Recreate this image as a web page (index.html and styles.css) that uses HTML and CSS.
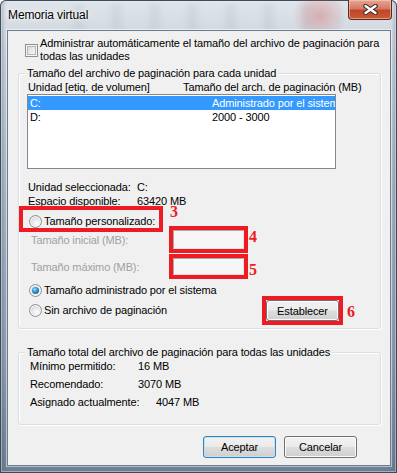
FILE: index.html
```html
<!DOCTYPE html>
<html lang="es">
<head>
    <meta charset="UTF-8">
    <meta name="viewport" content="width=device-width, initial-scale=1.0">
    <title>Memoria virtual</title>
    <link rel="stylesheet" href="styles.css">
</head>
<body>
<div class="window">
    <div class="glass-band"></div>
    <div class="glass-glow"></div>

    <div class="titlebar">
        <span class="title">Memoria virtual</span>
        <div class="close-btn">
            <svg width="17" height="11" viewBox="0 0 17 11">
                <path d="M3.5 2 L13.5 9 M13.5 2 L3.5 9" stroke="#3a2b28" stroke-width="4.5" stroke-linecap="round"/>
                <path d="M3.5 2 L13.5 9 M13.5 2 L3.5 9" stroke="#fff" stroke-width="2.4" stroke-linecap="round"/>
            </svg>
        </div>
    </div>

    <div class="client">
        <div class="auto-row">
            <span class="checkbox"></span>
            <span class="auto-label">Administrar automáticamente el tamaño del archivo de paginación para<br>todas las unidades</span>
        </div>

        <div class="group group-drives">
            <div class="group-title">Tamaño del archivo de paginación para cada unidad</div>
            <div class="list-head">
                <span class="col-drive">Unidad [etiq. de volumen]</span>
                <span>Tamaño del arch. de paginación (MB)</span>
            </div>
            <div class="listbox">
                <div class="list-item selected"><span class="item-drive">C:</span><span>Administrado por el sistema</span></div>
                <div class="list-item"><span class="item-drive">D:</span><span>2000 - 3000</span></div>
            </div>

            <div class="info-row first"><span class="info-label">Unidad seleccionada:</span><span>C:</span></div>
            <div class="info-row"><span class="info-label">Espacio disponible:</span><span>63420 MB</span></div>

            <div class="option custom mark">
                <span class="radio"></span>
                <span>Tamaño personalizado:</span>
                <span class="mark-num num-3">3</span>
            </div>

            <div class="size-row initial">
                <span class="size-label">Tamaño inicial (MB):</span>
                <span class="field">
                    <input class="edit mark" type="text" disabled>
                    <span class="mark-num num-4">4</span>
                </span>
            </div>
            <div class="size-row maximum">
                <span class="size-label">Tamaño máximo (MB):</span>
                <span class="field">
                    <input class="edit short mark" type="text" disabled>
                    <span class="mark-num num-5">5</span>
                </span>
            </div>

            <div class="option system">
                <span class="radio checked"></span>
                <span>Tamaño administrado por el sistema</span>
            </div>
            <div class="option-row">
                <div class="option">
                    <span class="radio"></span>
                    <span>Sin archivo de paginación</span>
                </div>
                <span class="btn-mark mark">
                    <button class="btn set-btn">Establecer</button>
                    <span class="mark-num num-6">6</span>
                </span>
            </div>
        </div>

        <div class="group group-total">
            <div class="group-title">Tamaño total del archivo de paginación para todas las unidades</div>
            <div class="totals">
                <div class="total-row"><span class="total-label">Mínimo permitido:</span><span>16 MB</span></div>
                <div class="total-row"><span class="total-label">Recomendado:</span><span>3070 MB</span></div>
                <div class="total-row"><span class="total-label wide">Asignado actualmente:</span><span>4047 MB</span></div>
            </div>
        </div>

        <div class="actions">
            <button class="btn default">Aceptar</button>
            <button class="btn">Cancelar</button>
        </div>
    </div>
</div>
</body>
</html>
```

FILE: styles.css
```css
body {
    margin: 0;
    font-family: "Liberation Sans", Arial, sans-serif;
    font-size: 11px;
    letter-spacing: -0.12px;
    color: #000;
    background: #fff;
}

/* aero frame */
.window {
    position: relative;
    width: 397px;
    height: 473px;
    display: flex;
    flex-direction: column;
    overflow: hidden;
    border-radius: 6px 6px 0 0;
    background: linear-gradient(180deg, #e1e6eb 0%, #cbd3db 10%, #a9b7c5 40%, #8e9fb0 75%, #6d7f92 100%);
    box-shadow: inset 0 0 0 1px #3b4c5e, inset 0 0 0 2px rgba(255, 255, 255, 0.4), inset 4px 0 4px -2px rgba(60, 78, 96, 0.45), inset -4px 0 4px -2px rgba(60, 78, 96, 0.45);
}
.glass-band {
    position: absolute;
    left: 70px;
    top: 4px;
    width: 270px;
    height: 26px;
    background: repeating-linear-gradient(90deg, rgba(150, 162, 175, 0) 0, rgba(150, 162, 175, 0.18) 8px, rgba(150, 162, 175, 0) 18px, rgba(150, 162, 175, 0) 38px);
    filter: blur(2px);
}
.glass-glow {
    position: absolute;
    left: 290px;
    top: -10px;
    width: 60px;
    height: 50px;
    border-radius: 50%;
    background: radial-gradient(circle, rgba(205, 80, 80, 0.35) 0%, rgba(205, 80, 80, 0) 70%);
}

.titlebar {
    position: relative;
    height: 30px;
    display: flex;
    justify-content: space-between;
    align-items: flex-start;
}
.title {
    margin: 8px 0 0 8px;
    line-height: 15px;
    font-size: 12px;
    text-shadow: 0 0 6px #fff, 0 0 3px #fff;
}
.close-btn {
    width: 44px;
    height: 20px;
    margin-right: 5px;
    box-sizing: border-box;
    display: flex;
    align-items: center;
    justify-content: center;
    border: 1px solid #5a2a20;
    border-top: none;
    border-radius: 0 0 4px 4px;
    background: linear-gradient(180deg, #e6a795 0%, #d47a64 45%, #c2452b 55%, #c95a35 100%);
    box-shadow: inset 0 0 0 1px rgba(255, 210, 190, 0.55);
}

.client {
    position: relative;
    flex: 1;
    margin: 0 6px 7px 7px;
    background: #f0f0f0;
    border: 1px solid #6b7c8e;
    box-shadow: 0 0 0 1px rgba(255, 255, 255, 0.5);
}

/* checkbox row */
.auto-row {
    display: flex;
    align-items: center;
    gap: 2px;
    margin: 6px 0 0 17px;
    line-height: 13px;
}
.checkbox {
    flex: none;
    width: 13px;
    height: 13px;
    box-sizing: border-box;
    border: 1px solid #8e8f8f;
    background: linear-gradient(135deg, #cfd3d8 0%, #eceef0 60%, #fafafa 100%);
    box-shadow: inset 0 0 0 1px #f6f6f6, inset 0 0 0 2px #b3b7bc;
}

/* group boxes */
.group {
    margin: 10px 9px 0 10px;
    border: 1px solid #d5dfe5;
    border-radius: 3px;
    box-shadow: inset 1px 1px 0 #fff, 1px 1px 0 #fff;
}
.group-title {
    width: fit-content;
    margin: -8px 0 0 6px;
    padding: 0 2px;
    line-height: 15px;
    background: #f0f0f0;
}
.group-drives {
    padding-bottom: 7px;
}
.group-total {
    margin-top: 23px;
    padding-bottom: 13px;
}

.list-head {
    display: flex;
    margin-left: 9px;
    line-height: 13px;
}
.col-drive {
    width: 155px;
}

.listbox {
    width: 309px;
    height: 75px;
    margin-left: 8px;
    box-sizing: border-box;
    padding-top: 1px;
    border: 1px solid #828790;
    background: #fff;
    overflow: hidden;
}
.list-item {
    display: flex;
    height: 14px;
    line-height: 14px;
    padding-left: 2px;
    white-space: nowrap;
}
.list-item.selected {
    background: #3399ff;
    color: #fff;
}
.item-drive {
    flex: none;
    width: 182px;
}

.info-row {
    display: flex;
    margin-left: 9px;
    line-height: 14px;
}
.info-row.first {
    margin-top: 11px;
}
.info-label {
    width: 109px;
}

/* radios */
.option {
    position: relative;
    display: flex;
    align-items: center;
    gap: 2px;
    line-height: 15px;
}
.radio {
    position: relative;
    flex: none;
    width: 13px;
    height: 13px;
    box-sizing: border-box;
    border: 1px solid #8e8f8f;
    border-radius: 50%;
    background: radial-gradient(circle at 60% 65%, #fdfdfd 0%, #e6e6e6 45%, #c9c9c9 100%);
    box-shadow: inset 0 0 0 1px #f7f7f7;
}
.radio.checked::after {
    content: "";
    position: absolute;
    left: 2px;
    top: 2px;
    width: 7px;
    height: 7px;
    border-radius: 50%;
    background: radial-gradient(circle at 40% 35%, #a8e4fb 0%, #2f93d4 40%, #0d4c87 100%);
}
.option.custom {
    width: 136px;
    height: 18px;
    box-sizing: border-box;
    margin: 2px 0 0 4px;
    padding: 4px 0 0 6px;
    line-height: 13px;
}
.option.system {
    margin: 8px 0 0 10px;
}
.option-row {
    display: flex;
    align-items: center;
    justify-content: space-between;
    margin: 2px 41px 0 10px;
}

/* annotations */
.mark {
    outline: 4px solid #ed1c24;
}
.mark-num {
    position: absolute;
    font-family: "Liberation Serif", serif;
    font-weight: bold;
    font-size: 16px;
    line-height: 16px;
    letter-spacing: 0;
    color: #ed1c24;
}
.num-3 { left: 147px; top: -6px; }
.num-4 { left: 76px; top: -1px; }
.num-5 { left: 76px; top: 4px; }
.num-6 { left: 81px; top: 4px; }

/* size fields */
.size-row {
    display: flex;
    align-items: center;
    margin-left: 12px;
    color: #a0a0a0;
}
.size-row.initial {
    margin-top: 2px;
}
.size-row.maximum {
    margin-top: 9px;
}
.size-label {
    width: 142px;
}
.field {
    position: relative;
    display: block;
}
.edit {
    display: block;
    width: 71px;
    height: 19px;
    margin: 0;
    padding: 0;
    box-sizing: border-box;
    border: 1px solid;
    border-color: #a9a9a9 #e2e2e2 #e2e2e2 #a9a9a9;
    background: #f6f6f6;
}
.edit.short {
    height: 17px;
}

/* buttons */
.btn {
    width: 73px;
    height: 22px;
    padding: 0;
    font-family: inherit;
    font-size: 11px;
    letter-spacing: inherit;
    color: #000;
    border: 1px solid #707070;
    border-radius: 3px;
    background: linear-gradient(180deg, #f2f2f2 0%, #ebebeb 48%, #dddddd 52%, #cfcfcf 100%);
    box-shadow: inset 0 0 0 1px #fbfbfb;
}
.btn.default {
    border-color: #3c7fb1;
    box-shadow: inset 0 0 0 1px #bfe3f6;
}
.btn-mark {
    position: relative;
    display: block;
}
.set-btn {
    display: block;
    height: 21px;
}

.totals {
    margin: -3px 0 0 11px;
}
.total-row {
    display: flex;
    line-height: 18px;
}
.total-label {
    width: 108px;
}
.total-label.wide {
    width: 126px;
}

.actions {
    display: flex;
    justify-content: flex-end;
    gap: 8px;
    margin: 11px 33px 0 0;
}
```
